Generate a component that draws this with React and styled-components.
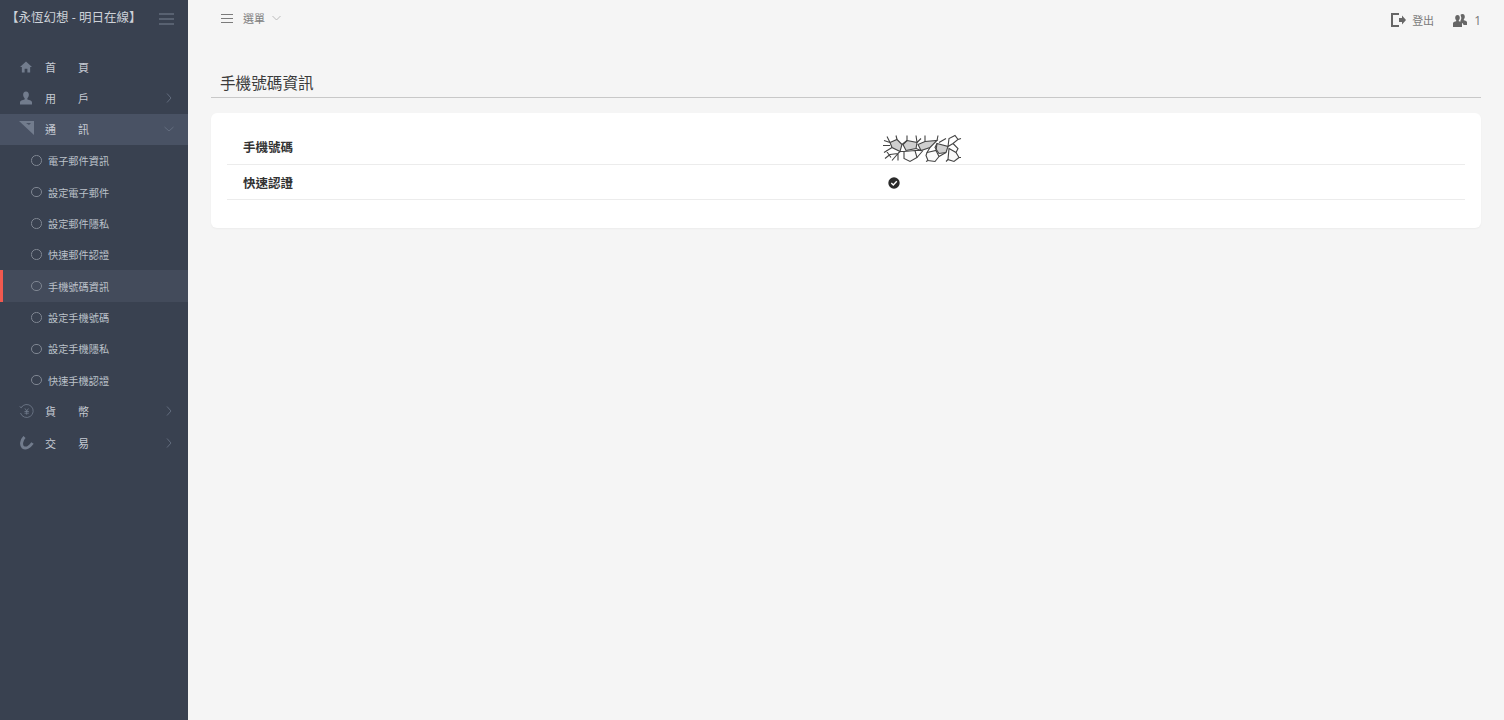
import React from "react";
import styled, { createGlobalStyle } from "styled-components";

const GlobalStyle = createGlobalStyle`
  html, body {
    margin: 0;
    padding: 0;
    height: 100%;
    background: #f5f5f5;
    font-family: "Open Sans", "Noto Sans CJK TC", sans-serif;
  }
`;

const Page = styled.div`
  display: flex;
  height: 720px;
  overflow: hidden;
`;

const Sidebar = styled.aside`
  width: 188px;
  flex: none;
  background: #394150;
  color: #c5cad3;
`;

const Brand = styled.div`
  height: 51px;
  box-sizing: border-box;
  padding: 9px 14px 0 6px;
  display: flex;
  justify-content: space-between;
  align-items: flex-start;
`;

const BrandName = styled.span`
  font-size: 12.5px;
  line-height: 18px;
  color: #cdd1d8;
  white-space: nowrap;
`;

const BrandToggle = styled.svg`
  width: 15px;
  height: 12px;
  margin-top: 4px;
`;

const Menu = styled.nav`
  display: flex;
  flex-direction: column;
`;

const TopItem = styled.div`
  height: 31.35px;
  display: flex;
  align-items: center;
  padding: 0 14px 0 20px;
  background: ${(p) => (p.$open ? "#495264" : "transparent")};
`;

const TopIcon = styled.span`
  width: 25px;
  height: 16px;
  flex: none;
  display: flex;
  align-items: center;
  color: #727c8d;
`;

const TopLabel = styled.span`
  flex: 1;
  font-size: 11px;
  letter-spacing: 22px;
  color: #c5cad3;
  white-space: nowrap;
`;

const SubItem = styled.div`
  height: 31.35px;
  box-sizing: border-box;
  display: flex;
  align-items: center;
  padding-left: ${(p) => (p.$active ? "28px" : "31px")};
  border-left: ${(p) => (p.$active ? "3px solid #f1594f" : "0")};
  background: ${(p) => (p.$active ? "#434b5b" : "transparent")};
`;

const Ring = styled.span`
  width: 8.5px;
  height: 8.5px;
  border: 1.5px solid #7f8692;
  border-radius: 50%;
  margin-right: 6.5px;
  flex: none;
`;

const SubLabel = styled.span`
  font-size: 10.2px;
  color: #bcc1ca;
`;

const Main = styled.main`
  flex: 1;
  min-width: 0;
  padding: 0 23px;
`;

const TopBar = styled.header`
  height: 36px;
  display: flex;
  align-items: center;
  justify-content: space-between;
  color: #7b7b7b;
  font-size: 11px;
`;

const BarGroup = styled.div`
  display: flex;
  align-items: center;
`;

const MenuTrigger = styled(BarGroup)`
  margin-left: 10px;
  gap: 10px;
  color: #808080;
`;

const MenuCaret = styled.svg`
  margin-left: -3px;
`;

const BarAction = styled(BarGroup)`
  gap: ${(p) => p.$gap}px;
  margin-left: 19px;
  margin-top: 4px;
`;

const Count = styled.span`
  font-size: 12px;
  color: #777;
`;

const PageHeader = styled.h1`
  margin: 36px 0 15px;
  padding: 0 0 3px 9px;
  font-size: 15.6px;
  line-height: 22px;
  font-weight: 400;
  color: #3b3b3b;
  border-bottom: 1px solid #c8c8c8;
`;

const Card = styled.section`
  background: #fff;
  border-radius: 6px;
  box-shadow: 0 1px 2px rgba(0, 0, 0, 0.04);
  padding: 16px 16px 28px;
  height: 115px;
  box-sizing: border-box;
`;

const Row = styled.div`
  display: grid;
  grid-template-columns: 50% 50%;
  align-items: center;
  height: ${(p) => p.$height}px;
  border-bottom: 1px solid #ececec;
`;

const RowLabel = styled.span`
  padding-left: 16px;
  font-size: 12.5px;
  font-weight: 700;
  color: #333;
`;

const RowValue = styled.span`
  display: flex;
  align-items: center;
  padding-left: ${(p) => p.$inset}px;
`;

const CheckMark = styled.svg`
  margin-top: 2px;
`;

const Chevron = ({ down }) => (
  <svg width="10" height="10" viewBox="0 0 10 10" fill="none" stroke="#667082" strokeWidth="0.9">
    {down ? <path d="M0.5 3l4.5 4 4.500-4" /> : <path d="M3 0.500l4 4.500-4 4.500" />}
  </svg>
);

const icons = {
  home: (
    <svg width="12" height="12" viewBox="0 0 13 12" fill="currentColor">
      <path d="M6.500 0L13 6h-2v6H8V8H5v4H2V6H0z" />
    </svg>
  ),
  user: (
    <svg width="12" height="14" viewBox="0 0 13 14" fill="currentColor">
      <path d="M6.500 0C8.600 0 9.600 1.600 9.600 3.600c0 1.600-.7 3-1.600 3.700v1.200c2.600.5 5 1.200 5 3V14H0v-2.500c0-1.800 2.400-2.500 5-3V7.300C4.100 6.600 3.400 5.200 3.400 3.600 3.400 1.600 4.400 0 6.500 0z" />
    </svg>
  ),
  mail: (
    <svg width="15" height="14" viewBox="0 0 15 14" fill="currentColor" style={{ marginTop: -3, marginLeft: -1 }}>
      <path d="M0 0h15v14zM7 2l3 2 2-2z" fillRule="evenodd" />
    </svg>
  ),
  money: (
    <svg width="15" height="15" viewBox="0 0 15 15" fill="none" stroke="currentColor" strokeWidth="0.8" style={{ marginLeft: -1 }}>
      <path d="M2.200 3.500A6.500 6.500 0 1 1 1.500 9" />
      <path d="M0.600 2.500l1.600 1.200 1.300-1.300" />
      <path d="M6 4.500l1.700 2.500 1.700-2.500M5.500 7.500h4.400M5.500 9.200h4.400M7.700 7v3.700" />
    </svg>
  ),
  trade: (
    <svg width="15" height="14" viewBox="0 0 15 14" fill="none" stroke="currentColor" strokeWidth="3" style={{ marginLeft: -1 }}>
      <path d="M5.500 1C2.500 4 1.500 9 4 11.300c3 2 7-.8 9.500-4.300" />
    </svg>
  ),
};

const topBefore = [
  { key: "home", label: "首頁" },
  { key: "user", label: "用戶", arrow: true },
];
const subItems = [
  "電子郵件資訊",
  "設定電子郵件",
  "設定郵件隱私",
  "快速郵件認證",
  "手機號碼資訊",
  "設定手機號碼",
  "設定手機隱私",
  "快速手機認證",
];
const topAfter = [
  { key: "money", label: "貨幣", arrow: true },
  { key: "trade", label: "交易", arrow: true },
];

const Top = ({ item }) => (
  <TopItem>
    <TopIcon>{icons[item.key]}</TopIcon>
    <TopLabel>{item.label}</TopLabel>
    {item.arrow && <Chevron />}
  </TopItem>
);

// the phone number is masked by an image of a cracked mesh in the original
const Scribble = () => (
  <svg width="85" height="32" viewBox="0 0.5 85 32" fill="none" stroke="#444" strokeWidth="1.1">
    <g fill="#cfcfcf">
      <path d="M10 12l7-3 5 5-2 7-8-4z" />
      <path d="M27 10l10 2-1 6-10 2-3-6z" />
      <path d="M45 11l12-1-7 7-9 3-3-6z" />
      <path d="M57 13l11 3-2 6-7 1-4-6z" />
    </g>
    <g fill="#fafafa">
      <path d="M24 21l11-1 2 7-7 4-6-3z" />
      <path d="M47 22l9-2 3 6-4 5-7-1-2-5z" />
      <path d="M69 18l7 4 3 5-5 4-6-2z" />
    </g>
    <path d="M4 10l6 2M7 6l3 6M16 5l1 4M3 15l7 0M4 22l8-5M6 20l5 7M10 24l8-1 2-2M18 23l0 7M5 28l5-4M12 30l6-7" />
    <path d="M22 14l5-4M27 5l0 5M20 21l4 0M37 12l4-4M36 5l1 7M36 18l5 2M35 20l6 0M37 27l6-7" />
    <path d="M45 11l0-6M50 17l-3 5M56 20l1-7M57 10l1-5M59 26l7-4M48 30l-2 1" />
    <path d="M68 16l1-8 6-3 3 4-5 4-5 3M78 9l3-1M73 13l5 5-2 4M79 27l2 0M68 29l-2 2M66 8l-7 4" />
  </svg>
);

export default function App() {
  return (
    <Page>
      <GlobalStyle />
      <Sidebar>
        <Brand>
          <BrandName>【永恆幻想 - 明日在線】</BrandName>
          <BrandToggle viewBox="0 0 15 12" stroke="#798291" strokeWidth="1">
            <path d="M0 1h15M0 6h15M0 11h15" />
          </BrandToggle>
        </Brand>
        <Menu>
          {topBefore.map((item) => (
            <Top key={item.key} item={item} />
          ))}
          <TopItem $open>
            <TopIcon>{icons.mail}</TopIcon>
            <TopLabel>通訊</TopLabel>
            <Chevron down />
          </TopItem>
          {subItems.map((label, i) => (
            <SubItem key={label} $active={i === 4}>
              <Ring />
              <SubLabel>{label}</SubLabel>
            </SubItem>
          ))}
          {topAfter.map((item) => (
            <Top key={item.key} item={item} />
          ))}
        </Menu>
      </Sidebar>
      <Main>
        <TopBar>
          <MenuTrigger>
            <svg width="12" height="9" viewBox="0 0 12 9" stroke="#7b7b7b" strokeWidth="1">
              <path d="M0 .5h12M0 4.500h12M0 8.500h12" />
            </svg>
            <span>選單</span>
            <MenuCaret width="9" height="6" viewBox="0 0 9 6" fill="none" stroke="#bbb" strokeWidth="1">
              <path d="M.5 1l4 4 4-4" />
            </MenuCaret>
          </MenuTrigger>
          <BarGroup>
            <BarAction $gap={6}>
              <svg width="15" height="14" viewBox="0 0 15 14" fill="#666">
                <path d="M0 0h8v2H2v10h6v2H0zM8 5h3V2.500L15 7l-4 4.500V9H8z" />
              </svg>
              <span>登出</span>
            </BarAction>
            <BarAction $gap={7}>
              <svg width="14" height="13" viewBox="0 0 14 13" fill="#666">
                <path d="M4.500 1c1.500 0 2.300 1.200 2.300 2.800 0 1-.4 2-1 2.500v1c1.600.3 3.200.9 3.200 2V13H0v-3.700c0-1.100 1.600-1.700 3.200-2v-1c-.6-.5-1-1.500-1-2.500C2.200 2.200 3 1 4.500 1zM9.500 0C11 0 11.800 1.200 11.800 2.800c0 1-.4 2-1 2.500v1c1.600.3 3.200.9 3.200 2V11h-3.500c0-1.500-1.500-2.500-3-3V6.500c.7-1 .9-2 .7-3.200C8 2.500 7.800 1.500 7.500.8 8 .3 8.700 0 9.500 0z" />
              </svg>
              <Count>1</Count>
            </BarAction>
          </BarGroup>
        </TopBar>
        <PageHeader>手機號碼資訊</PageHeader>
        <Card>
          <Row $height={35}>
            <RowLabel>手機號碼</RowLabel>
            <RowValue $inset={34}>
              <Scribble />
            </RowValue>
          </Row>
          <Row $height={34}>
            <RowLabel>快速認證</RowLabel>
            <RowValue $inset={42}>
              <CheckMark width="12" height="12" viewBox="0 0 12 12">
                <circle cx="6" cy="6" r="5.700" fill="#2b2b2b" />
                <path d="M3.300 6l2 2 3.500-3.700" fill="none" stroke="#fff" strokeWidth="1.400" />
              </CheckMark>
            </RowValue>
          </Row>
        </Card>
      </Main>
    </Page>
  );
}
